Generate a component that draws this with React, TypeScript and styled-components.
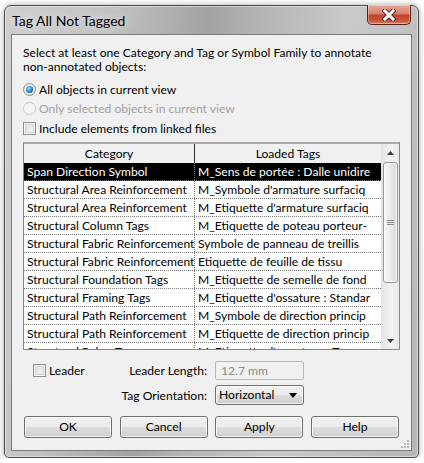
import React from "react";
import styled, { createGlobalStyle } from "styled-components";

const Global = createGlobalStyle`
  html, body { margin: 0; padding: 0; background: #ffffff; }
  body { font-family: Lato, Roboto, sans-serif; font-size: 12.1px; color: #000; }
  * { box-sizing: border-box; }
`;

const Window = styled.div`
  position: relative;
  margin: 5px 0 0 4px;
  width: 415px;
  height: 453px;
  border: 1px solid #4b4b4b;
  border-radius: 7px 7px 5px 5px;
  background: linear-gradient(100deg, #cfcfcf 0%, #c2c2c2 22%, #a2a2a2 42%, #b4b4b4 52%, #c9c9c9 70%, #b6b6b6 100%);
  box-shadow: inset 0 0 0 1px rgba(255,255,255,0.45), 0 0 6px rgba(0,0,0,0.35);
  display: flex;
  flex-direction: column;
`;

const TitleBar = styled.div`
  height: 28px;
  display: flex;
  justify-content: space-between;
  align-items: flex-start;
  padding-left: 7px;
`;

const Title = styled.div`
  font-family: Lato, sans-serif;
  font-size: 14px;
  line-height: 14px;
  padding-top: 8px;
  color: #000;
  text-shadow: 0 0 8px rgba(255,255,255,0.9);
`;

const CloseBtn = styled.div`
  margin-top: -1px;
  margin-right: 7px;
  width: 44px;
  height: 20px;
  border: 1px solid #5a2118;
  border-top: none;
  border-radius: 0 0 5px 5px;
  background: linear-gradient(180deg, #e9a99b 0%, #d9816e 45%, #c2412a 55%, #c85a3c 85%, #e08a62 100%);
  box-shadow: inset 0 0 0 1px rgba(255,255,255,0.35);
  display: flex;
  align-items: center;
  justify-content: center;
`;

const Client = styled.div`
  position: relative;
  flex: 1;
  margin: 0 6px 6px 6px;
  border: 1px solid #7b7b7b;
  background: #f0f0f0;
  padding: 11px 11px 0 11px;
  display: flex;
  flex-direction: column;
`;

const Intro = styled.div`
  line-height: 14px;
`;

const OptionRow = styled.div<{ $h: number; $disabled?: boolean }>`
  height: ${(p) => p.$h}px;
  display: flex;
  align-items: center;
  gap: 3px;
  color: ${(p) => (p.$disabled ? "#a0a0a0" : "#000")};
  white-space: nowrap;
`;

const Radio = styled.span<{ $checked?: boolean; $disabled?: boolean }>`
  width: 13px;
  height: 13px;
  border-radius: 50%;
  border: 1px solid ${(p) => (p.$disabled ? "#c8c8c8" : "#8e8f8f")};
  background: ${(p) => (p.$disabled ? "#f4f4f4" : "radial-gradient(circle at 50% 40%, #ffffff 0%, #e6e6e6 70%, #d2d2d2 100%)")};
  display: inline-flex;
  align-items: center;
  justify-content: center;
  flex: none;
  &::after {
    content: "";
    display: ${(p) => (p.$checked ? "block" : "none")};
    width: 7px;
    height: 7px;
    border-radius: 50%;
    background: radial-gradient(circle at 40% 35%, #9be3ff 0%, #2f8fd0 45%, #0b3d73 100%);
  }
`;

const Check = styled.span`
  width: 13px;
  height: 13px;
  border: 1px solid #8e8f8f;
  background: linear-gradient(135deg, #dcdcdc 0%, #f6f6f6 100%);
  box-shadow: inset 0 0 0 1px #f4f4f4, inset 0 0 0 2px #d6d6d6;
  flex: none;
`;

const Table = styled.div`
  margin-top: 4px;
  height: 208px;
  border: 1px solid #828790;
  border-top: 2px solid #a9a9a9;
  background: #ffffff;
  display: flex;
`;

const DataArea = styled.div`
  flex: 1;
  overflow: hidden;
  display: flex;
  flex-direction: column;
`;

const Row = styled.div<{ $selected?: boolean }>`
  display: grid;
  grid-template-columns: 171px 187px;
  height: 18px;
  flex: none;
  background: ${(p) => (p.$selected ? "#000000" : "#ffffff")};
  color: ${(p) => (p.$selected ? "#ffffff" : "#000000")};
  border-bottom: 1px dotted #7a7a7a;
`;

const Cell = styled.div`
  padding-left: 3px;
  line-height: 17px;
  white-space: nowrap;
  overflow: hidden;
  border-right: 1px dotted #7a7a7a;
`;

const HeaderRow = styled.div`
  display: grid;
  grid-template-columns: 171px 187px;
  height: 19px;
  flex: none;
  background: #f0f0f0;
`;

const HeaderCell = styled.div`
  text-align: center;
  line-height: 19px;
  border-right: 1px solid #2a2a2a;
`;

const ScrollBar = styled.div`
  width: 18px;
  flex: none;
  background: linear-gradient(90deg, #e6e6e6 0%, #f2f2f2 50%, #e9e9e9 100%);
  border-left: 1px solid #e0e0e0;
  display: flex;
  flex-direction: column;
`;

const ArrowBtn = styled.div`
  height: 17px;
  flex: none;
  display: flex;
  align-items: center;
  justify-content: center;
`;

const Thumb = styled.div`
  margin: 1px 1px 0 1px;
  height: 121px;
  border: 1px solid #979797;
  border-radius: 3px;
  background: linear-gradient(90deg, #f6f6f6 0%, #e9e9e9 50%, #d8d8d8 100%);
  box-shadow: inset 0 0 0 1px #fbfbfb;
  display: flex;
  align-items: center;
  justify-content: center;
`;

const Spacer = styled.div`
  flex: 1;
`;

const BottomGrid = styled.div`
  margin-top: 11px;
  padding-left: 10px;
  display: grid;
  grid-template-columns: 174px 89px;
  grid-template-rows: 19px 20px;
  column-gap: 8px;
  row-gap: 5px;
  align-items: center;
`;

const LeaderCell = styled.div`
  display: flex;
  align-items: center;
  justify-content: space-between;
`;

const LeaderCheck = styled.div`
  display: flex;
  align-items: center;
  gap: 3px;
`;

const Label = styled.div`
  text-align: right;
  white-space: nowrap;
`;

const TextBox = styled.div`
  height: 19px;
  border: 1px solid #b8b8b8;
  border-radius: 2px;
  background: #f0f0f0;
  color: #8a8a8a;
  padding-left: 5px;
  line-height: 17px;
`;

const Combo = styled.div`
  height: 20px;
  border: 1px solid #707070;
  border-radius: 3px;
  background: linear-gradient(180deg, #f2f2f2 0%, #ebebeb 49%, #dddddd 51%, #cfcfcf 100%);
  box-shadow: inset 0 0 0 1px rgba(255,255,255,0.7);
  display: flex;
  align-items: center;
  justify-content: space-between;
  padding: 0 6px 0 3px;
  line-height: 18px;
`;

const ButtonRow = styled.div`
  margin: 11px 1px 0 1px;
  display: flex;
  justify-content: space-between;
`;

const Button = styled.div`
  width: 88px;
  height: 22px;
  border: 1px solid #707070;
  border-radius: 3px;
  background: linear-gradient(180deg, #f2f2f2 0%, #ebebeb 49%, #dddddd 51%, #cfcfcf 100%);
  box-shadow: inset 0 0 0 1px rgba(255,255,255,0.75);
  text-align: center;
  line-height: 20px;
`;

const Grip = styled.svg`
  position: absolute;
  right: 2px;
  bottom: 2px;
`;

const rows: [string, string][] = [
  ["Span Direction Symbol", "M_Sens de portée : Dalle unidire"],
  ["Structural Area Reinforcement", "M_Symbole d'armature surfaciq"],
  ["Structural Area Reinforcement", "M_Etiquette d'armature surfaciq"],
  ["Structural Column Tags", "M_Etiquette de poteau porteur-"],
  ["Structural Fabric Reinforcement", "Symbole de panneau de treillis"],
  ["Structural Fabric Reinforcement", "Etiquette de feuille de tissu"],
  ["Structural Foundation Tags", "M_Etiquette de semelle de fond"],
  ["Structural Framing Tags", "M_Etiquette d'ossature : Standar"],
  ["Structural Path Reinforcement", "M_Symbole de direction princip"],
  ["Structural Path Reinforcement", "M_Etiquette de direction princip"],
  ["Structural Rebar Tags", "M_Etiquette d'armature : Tag"],
];

export default function App() {
  return (
    <>
      <Global />
      <Window>
        <TitleBar>
          <Title>Tag All Not Tagged</Title>
          <CloseBtn>
            <svg width="14" height="12" viewBox="0 0 14 12">
              <path d="M3 2 L11 10 M11 2 L3 10" stroke="#4a2a26" strokeWidth="5" strokeLinecap="square" />
              <path d="M3 2 L11 10 M11 2 L3 10" stroke="#ffffff" strokeWidth="3" strokeLinecap="square" />
            </svg>
          </CloseBtn>
        </TitleBar>
        <Client>
          <Intro>
            Select at least one Category and Tag or Symbol Family to annotate
            <br />
            non-annotated objects:
          </Intro>
          <OptionRow $h={19} style={{ marginTop: 6 }}>
            <Radio $checked />
            All objects in current view
          </OptionRow>
          <OptionRow $h={19} $disabled>
            <Radio $disabled />
            Only selected objects in current view
          </OptionRow>
          <OptionRow $h={20}>
            <Check />
            Include elements from linked files
          </OptionRow>
          <Table>
            <DataArea>
              <HeaderRow>
                <HeaderCell>Category</HeaderCell>
                <HeaderCell>Loaded Tags</HeaderCell>
              </HeaderRow>
              {rows.map(([c, t], i) => (
                <Row key={i} $selected={i === 0}>
                  <Cell>{c}</Cell>
                  <Cell>{t}</Cell>
                </Row>
              ))}
            </DataArea>
            <ScrollBar>
              <ArrowBtn>
                <svg width="7" height="4" viewBox="0 0 7 4">
                  <path d="M3.5 0 L7 4 L0 4 Z" fill="#3c3c3c" />
                </svg>
              </ArrowBtn>
              <Thumb>
                <svg width="7" height="7" viewBox="0 0 7 7">
                  <path d="M0 1.5 H7 M0 3.5 H7 M0 5.5 H7" stroke="#8a8a8a" strokeWidth="1" />
                </svg>
              </Thumb>
              <Spacer />
              <ArrowBtn>
                <svg width="7" height="4" viewBox="0 0 7 4">
                  <path d="M0 0 L7 0 L3.5 4 Z" fill="#3c3c3c" />
                </svg>
              </ArrowBtn>
            </ScrollBar>
          </Table>
          <BottomGrid>
            <LeaderCell>
              <LeaderCheck>
                <Check />
                Leader
              </LeaderCheck>
              <Label>Leader Length:</Label>
            </LeaderCell>
            <TextBox>12.7 mm</TextBox>
            <Label>Tag Orientation:</Label>
            <Combo>
              Horizontal
              <svg width="8" height="5" viewBox="0 0 8 5">
                <path d="M0 0 L8 0 L4 5 Z" fill="#000" />
              </svg>
            </Combo>
          </BottomGrid>
          <ButtonRow>
            <Button>OK</Button>
            <Button>Cancel</Button>
            <Button>Apply</Button>
            <Button>Help</Button>
          </ButtonRow>
          <Grip width="8" height="8" viewBox="0 0 8 8">
            <rect x="6" y="0" width="2" height="2" fill="#b8b8b8" />
            <rect x="3" y="3" width="2" height="2" fill="#b8b8b8" />
            <rect x="6" y="3" width="2" height="2" fill="#b8b8b8" />
            <rect x="0" y="6" width="2" height="2" fill="#b8b8b8" />
            <rect x="3" y="6" width="2" height="2" fill="#b8b8b8" />
            <rect x="6" y="6" width="2" height="2" fill="#b8b8b8" />
          </Grip>
        </Client>
      </Window>
    </>
  );
}
